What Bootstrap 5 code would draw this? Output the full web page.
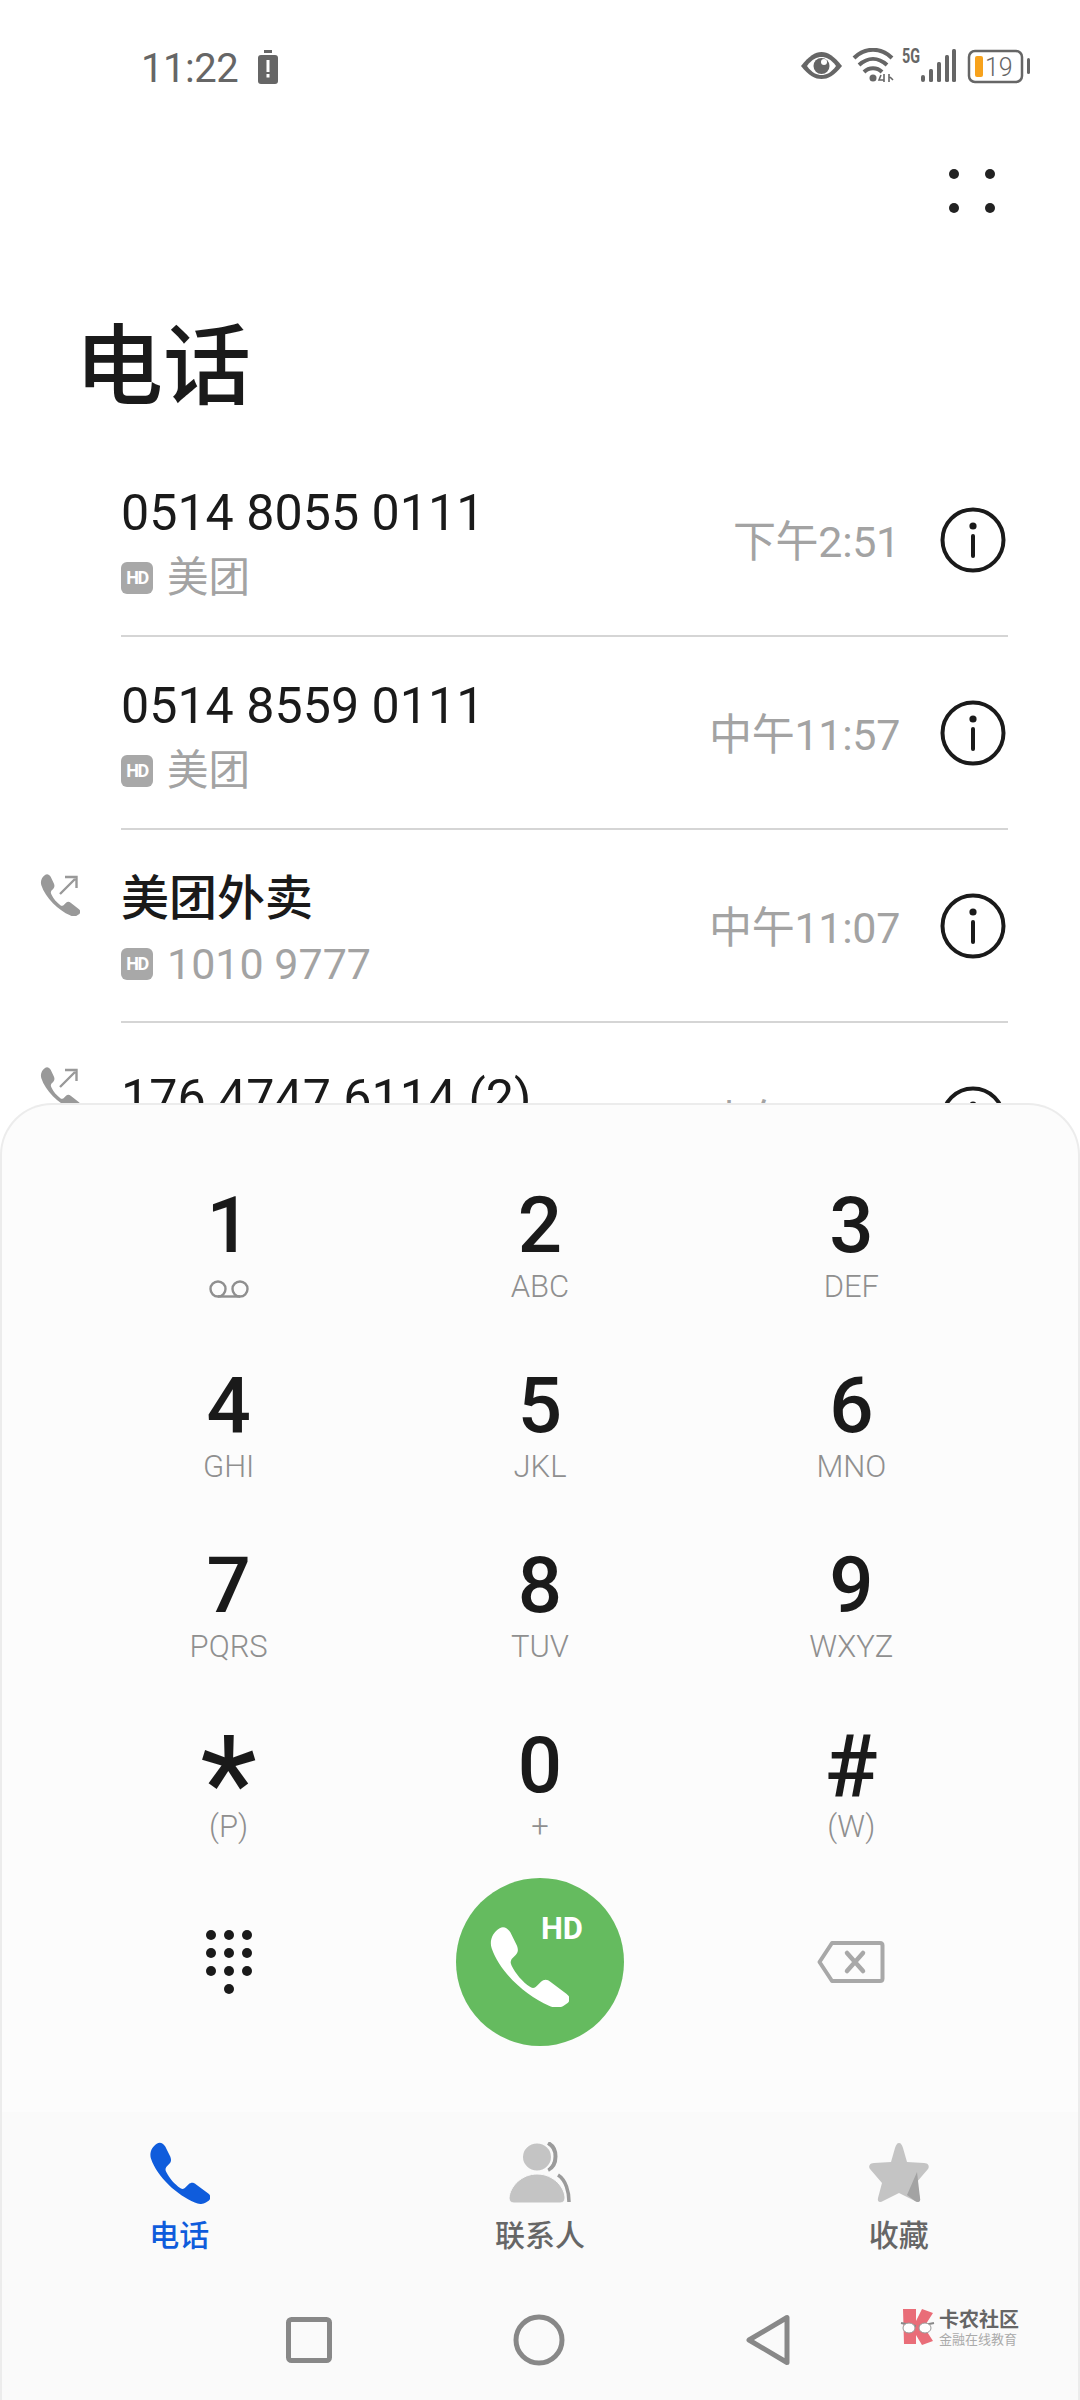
<!DOCTYPE html>
<html lang="zh">
<head>
<meta charset="utf-8">
<title>电话</title>
<link href="https://cdn.jsdelivr.net/npm/bootstrap@5.3.0/dist/css/bootstrap.min.css" rel="stylesheet">
<style>
html,body{margin:0;background:#fff}
body{font-family:Roboto,"Noto Sans CJK SC",sans-serif;color:#1a1a1a}
.phone-page{width:1080px;height:2400px;position:relative;overflow:hidden;background:#fff}
.status-strip{height:100px;padding:48px 50px 0 141px}
.clock-text{font-size:40px;line-height:34px;color:#666;letter-spacing:-.5px;width:117px;padding-top:4px;height:38px}
.menu-strip{height:181px;padding:0 85px 0 0;align-items:center}
.menu-dots{width:46px;height:44px;display:grid;grid-template-columns:10px 10px;justify-content:space-between;align-content:space-between}
.menu-dots i{width:10px;height:10px;border-radius:50%;background:#222;display:block}
.page-title{font-size:88px;line-height:100px;font-weight:500;padding:0 0 0 75px;margin:36px 0 0;height:127px;color:#1a1a1a}
.call-row{height:193px;padding-left:121px;padding-right:72px;position:relative}
.call-inner{height:193px;border-bottom:2px solid #d5d5d5;display:flex;align-items:center;justify-content:space-between}
.call-text{padding-top:18px}
.call-text.peek-text{padding-top:12px}
.call-out{position:absolute;left:40px;top:44px;width:40px;height:42px}
.call-name{font-size:50.2px;line-height:56px;color:#1a1a1a;margin-top:-10px}
.call-name.cjk-name{font-size:48px;font-weight:500}
.call-sub{font-size:41.5px;line-height:50px;color:#a3a3a3;margin-top:12px;display:flex;align-items:center;gap:14px}
.call-sub.num-sub{font-size:43px}
.hd-chip{width:32px;height:32px;border-radius:6px;background:#a8a8a8;color:#fff;font-size:18px;font-weight:700;line-height:32px;text-align:center;letter-spacing:-1.5px}
.call-side{display:flex;align-items:center;gap:40px}
.call-time{font-size:43px;color:#a3a3a3;line-height:50px;letter-spacing:-.3px;padding-top:4px}
.info-mark{width:66px;height:66px;display:block;margin-right:2px}
.dial-panel{position:absolute;left:0;right:0;top:1103px;bottom:0;background:#fcfcfc;border:2px solid #ececec;border-bottom:0;border-radius:52px 52px 0 0;display:flex;flex-direction:column}
.key-grid{padding:30px 71px 0;margin:0}
.key-cell{height:180px;text-align:center;padding:47px 0 0}
.key-num{font-size:78px;line-height:88px;height:88px;font-weight:500;color:#1a1a1a}
.key-num.asterisk{font-size:132px;font-weight:400;line-height:88px;height:70px;padding-top:18px;box-sizing:content-box}
.key-num.hash-key{font-size:88px}
.key-txt{font-size:31px;line-height:36px;font-weight:300;color:#8f8f8f;margin-top:-1px;height:36px}
.action-row{padding:23px 71px 0;margin:0;align-items:center}
.action-cell{padding:0;display:flex;justify-content:center;align-items:center;height:168px}
.call-btn{width:168px;height:168px;border:0;border-radius:50%;background:#65bb5f;padding:10px 21px 0 0;position:relative;display:flex;align-items:center;justify-content:center}
.call-btn span{position:absolute;left:85px;top:33px;color:#fff;font-weight:700;font-size:31px;line-height:36px}
.tab-strip{margin:66px 0 0;background:#fafafa;height:176px}
.tab-cell{padding:30px 0 0;text-align:center;font-size:30px;font-weight:500;color:#666;line-height:34px}
.tab-cell svg{display:block;margin:0 auto 15px;height:62px}
.tab-cell.on{color:#0f5cdc;padding-right:4px}
.nav-strip{background:#fafafa;flex:1;padding:26px 0 0 284px;gap:181px;align-items:center;position:relative}
.nav-strip svg{display:block}
.nav-wrap{flex:1;min-height:0;background:#fafafa;position:relative}
.mark-box{position:absolute;left:898px;top:21px;width:130px;height:38px;display:flex;gap:3px}
.mark-a{font-size:20px;line-height:22px;font-weight:700;color:#666;letter-spacing:0;white-space:nowrap}
.mark-b{font-size:13px;line-height:14px;color:#aaa;white-space:nowrap;margin-top:2px}
</style>
</head>
<body>
<svg width="0" height="0" class="d-block position-absolute">
  <defs>
    <symbol id="handset" viewBox="0 0 60 60">
      <path d="M8 1C11-1 14 1 16 4L21 14C22 17 22 19 20 21L17 24C16 26 16 27 17 29C20 35 25 41 31 45C33 46 34 46 36 44L39 41C41 39 44 39 46 41L58 50C61 52 61 55 59 57L56 59C53 61 49 61 45 59C28 52 8 34 2 16C0 10 3 4 8 1Z"/>
    </symbol>
    <symbol id="infoc" viewBox="0 0 66 66">
      <circle cx="33" cy="33" r="30.500" fill="none" stroke="#1a1a1a" stroke-width="4"/>
      <circle cx="33" cy="19" r="3.600" fill="#1a1a1a"/>
      <rect x="31" y="27" width="4" height="24" rx="2" fill="#1a1a1a"/>
    </symbol>
    <symbol id="outcall" viewBox="0 0 40 42">
      <path transform="scale(.667 .7)" d="M8 1C11-1 14 1 16 4L21 14C22 17 22 19 20 21L17 24C16 26 16 27 17 29C20 35 25 41 31 45C33 46 34 46 36 44L39 41C41 39 44 39 46 41L58 50C61 52 61 55 59 57L56 59C53 61 49 61 45 59C28 52 8 34 2 16C0 10 3 4 8 1Z" fill="#999"/>
      <path d="M20 20L35 5M25 3H36.500V14" fill="none" stroke="#999" stroke-width="2.400"/>
    </symbol>
  </defs>
</svg>
<main class="phone-page">
  <header class="status-strip d-flex align-items-start justify-content-between">
    <div class="d-flex align-items-center">
      <span class="clock-text">11:22</span>
      <svg width="20" height="34" viewBox="0 0 20 34"><rect x="6" y="0" width="8" height="3" fill="#666"/><rect x="0" y="5" width="20" height="29" rx="3" fill="#666"/><rect x="8.500" y="10" width="3" height="12" fill="#fff"/><rect x="8.500" y="24" width="3" height="3.500" fill="#fff"/></svg>
    </div>
    <div class="d-flex align-items-start">
      <svg width="229" height="36" viewBox="0 0 229 36">
        <path d="M0 18C8 8 14 4 20.500 4C27 4 33 8 41 18C33 28 27 31 20.500 31C14 31 8 28 0 18Z" fill="#666"/>
        <path d="M6 18C11 11 16 9 20.500 9C25 9 30 11 35 18C30 25 25 27 20.500 27C16 27 11 25 6 18Z" fill="#fff"/>
        <circle cx="20.500" cy="18" r="8" fill="#666"/>
        <circle cx="23" cy="14" r="3" fill="#fff"/>
        <path d="M53 10C64-1 80-1 91 10M58 17C67 9 77 9 86 17M63 24C68 19 76 19 81 24" fill="none" stroke="#666" stroke-width="4"/>
        <circle cx="72" cy="30" r="3.500" fill="#666"/>
        <path d="M80 27L78 32H83M83 26V34M88 26V34M89 29L92 32" fill="none" stroke="#666" stroke-width="1.600"/>
        <text x="101" y="15" font-family="Roboto" font-size="20" font-weight="700" fill="#666" textLength="18" lengthAdjust="spacingAndGlyphs">5G</text>
        <g fill="#666"><rect x="120" y="27" width="4" height="7" rx="2"/><rect x="128" y="21" width="4" height="13" rx="1.500"/><rect x="136" y="14" width="4" height="20" rx="1.500"/><rect x="144" y="7" width="4" height="27" rx="1.500"/><rect x="151" y="1" width="4" height="33" rx="1.500"/></g>
        <rect x="168" y="3" width="53" height="31" rx="6" fill="none" stroke="#666" stroke-width="2.500"/>
        <rect x="174" y="8" width="8" height="21" rx="2" fill="#f7a21c"/>
        <text x="184" y="28" font-family="Roboto" font-size="25" fill="#666" font-weight="300">19</text>
        <rect x="226" y="10" width="3" height="16" rx="1.500" fill="#666"/>
      </svg>
    </div>
  </header>
  <div class="menu-strip d-flex justify-content-end">
    <div class="menu-dots"><i></i><i></i><i></i><i></i></div>
  </div>
  <h1 class="page-title">电话</h1>
  <section>
    <div class="call-row"><div class="call-inner"><div class="call-text"><div class="call-name">0514 8055 0111</div><div class="call-sub"><span class="hd-chip">HD</span><span>美团</span></div></div><div class="call-side"><span class="call-time">下午2:51</span><svg class="info-mark"><use href="#infoc"/></svg></div></div></div>
    <div class="call-row"><div class="call-inner"><div class="call-text"><div class="call-name">0514 8559 0111</div><div class="call-sub"><span class="hd-chip">HD</span><span>美团</span></div></div><div class="call-side"><span class="call-time">中午11:57</span><svg class="info-mark"><use href="#infoc"/></svg></div></div></div>
    <div class="call-row"><svg class="call-out"><use href="#outcall"/></svg><div class="call-inner"><div class="call-text"><div class="call-name cjk-name">美团外卖</div><div class="call-sub num-sub"><span class="hd-chip">HD</span><span>1010 9777</span></div></div><div class="call-side"><span class="call-time">中午11:07</span><svg class="info-mark"><use href="#infoc"/></svg></div></div></div>
    <div class="call-row"><svg class="call-out"><use href="#outcall"/></svg><div class="call-inner"><div class="call-text peek-text"><div class="call-name">176 4747 6114 (2)</div><div class="call-sub"><span class="hd-chip">HD</span></div></div><div class="call-side"><span class="call-time">上午10:42</span><svg class="info-mark"><use href="#infoc"/></svg></div></div></div>
  </section>

  <section class="dial-panel">
    <div class="row key-grid">
      <div class="col-4 key-cell"><div class="key-num">1</div><div class="key-txt"><svg width="42" height="18" viewBox="0 0 42 18"><circle cx="10" cy="9" r="7.500" fill="none" stroke="#8f8f8f" stroke-width="2.400"/><circle cx="32" cy="9" r="7.500" fill="none" stroke="#8f8f8f" stroke-width="2.400"/><path d="M10 16.500H32" stroke="#8f8f8f" stroke-width="2.400"/></svg></div></div>
      <div class="col-4 key-cell"><div class="key-num">2</div><div class="key-txt">ABC</div></div>
      <div class="col-4 key-cell"><div class="key-num">3</div><div class="key-txt">DEF</div></div>
      <div class="col-4 key-cell"><div class="key-num">4</div><div class="key-txt">GHI</div></div>
      <div class="col-4 key-cell"><div class="key-num">5</div><div class="key-txt">JKL</div></div>
      <div class="col-4 key-cell"><div class="key-num">6</div><div class="key-txt">MNO</div></div>
      <div class="col-4 key-cell"><div class="key-num">7</div><div class="key-txt">PQRS</div></div>
      <div class="col-4 key-cell"><div class="key-num">8</div><div class="key-txt">TUV</div></div>
      <div class="col-4 key-cell"><div class="key-num">9</div><div class="key-txt">WXYZ</div></div>
      <div class="col-4 key-cell"><div class="key-num asterisk">*</div><div class="key-txt">(P)</div></div>
      <div class="col-4 key-cell"><div class="key-num">0</div><div class="key-txt">+</div></div>
      <div class="col-4 key-cell"><div class="key-num hash-key">#</div><div class="key-txt">(W)</div></div>
    </div>
    <div class="row action-row">
      <div class="col-4 action-cell">
        <svg width="46" height="64" viewBox="0 0 46 64" fill="#1a1a1a"><circle cx="5" cy="5" r="5"/><circle cx="23" cy="5" r="5"/><circle cx="41" cy="5" r="5"/><circle cx="5" cy="23" r="5"/><circle cx="23" cy="23" r="5"/><circle cx="41" cy="23" r="5"/><circle cx="5" cy="41" r="5"/><circle cx="23" cy="41" r="5"/><circle cx="41" cy="41" r="5"/><circle cx="23" cy="59" r="5"/></svg>
      </div>
      <div class="col-4 action-cell">
        <button type="button" class="btn call-btn"><svg width="80" height="80" fill="#fff"><use href="#handset"/></svg><span>HD</span></button>
      </div>
      <div class="col-4 action-cell">
        <svg width="68" height="44" viewBox="0 0 68 44" fill="none" stroke="#a8a8a8" stroke-width="4" stroke-linejoin="round"><path d="M15 3H63C64.500 3 65.500 4 65.500 5.500V38.500C65.500 40 64.500 41 63 41H15L2.500 22Z"/><path d="M30 13L46 31M46 13L30 31" stroke-width="4.500" stroke-linecap="round"/></svg>
      </div>
    </div>
    <nav class="row tab-strip">
      <div class="col-4 tab-cell on"><svg width="61" height="62" fill="#0f5cdc"><use href="#handset"/></svg>电话</div>
      <div class="col-4 tab-cell"><svg width="62" height="62" viewBox="0 0 62 62"><path d="M39 1C49 6 49 23 39 28" fill="none" stroke="#9b9b9b" stroke-width="4"/><path d="M49 33C57 38 60 50 60 60" fill="none" stroke="#9b9b9b" stroke-width="3.500"/><ellipse cx="28" cy="15" rx="15" ry="14.500" fill="#c4c4c4" stroke="#fafafa" stroke-width="2"/><path d="M28 32C45 32 56 46 56 56C56 59 54 61 51 61H5C2 61 0 59 0 56C1 44 13 32 28 32Z" fill="#c4c4c4" stroke="#fafafa" stroke-width="1"/></svg>联系人</div>
      <div class="col-4 tab-cell"><svg width="62" height="62" viewBox="0 0 62 62"><path d="M31 1C33 1 34 3 35 6L39 20L56 21C60 21 62 24 60 27L48 41L52 56C53 60 50 61 47 59L31 51L15 59C12 61 9 60 10 56L14 41L2 27C0 24 2 21 6 21L23 20L27 6C28 3 29 1 31 1Z" fill="#c4c4c4"/><path d="M49 30L39 53L47 59C50 61 53 60 52 56Z" fill="#a3a3a3"/></svg>收藏</div>
    </nav>
    <div class="nav-wrap">
      <div class="nav-strip d-flex">
        <svg width="46" height="46" viewBox="0 0 46 46"><rect x="2.500" y="2.500" width="41" height="41" rx="3" fill="none" stroke="#888" stroke-width="5"/></svg>
        <svg width="52" height="52" viewBox="0 0 52 52"><circle cx="26" cy="26" r="23" fill="none" stroke="#888" stroke-width="5"/></svg>
        <svg width="44" height="52" viewBox="0 0 44 52"><path d="M41 3.500V48.500L3 26Z" fill="none" stroke="#888" stroke-width="5" stroke-linejoin="round"/></svg>
      </div>
      <div class="mark-box">
        <svg width="36" height="36" viewBox="0 0 36 36" class="flex-shrink-0"><path d="M3 0H16V12L22 0L33 4L24 18L33 32L22 36L16 26V35H4Z" fill="#e96d78"/><path d="M1 14L16 17M19 17L34 14" stroke="#888" stroke-width="2" fill="none"/><ellipse cx="9" cy="19" rx="6" ry="5" fill="#fff" stroke="#999" stroke-width="1"/><ellipse cx="25" cy="19" rx="6" ry="5" fill="#fff" stroke="#999" stroke-width="1"/></svg>
        <div><div class="mark-a">卡农社区</div><div class="mark-b">金融在线教育</div></div>
      </div>
    </div>
  </section>
</main>
<script src="https://cdn.jsdelivr.net/npm/bootstrap@5.3.0/dist/js/bootstrap.bundle.min.js"></script>
</body>
</html>
